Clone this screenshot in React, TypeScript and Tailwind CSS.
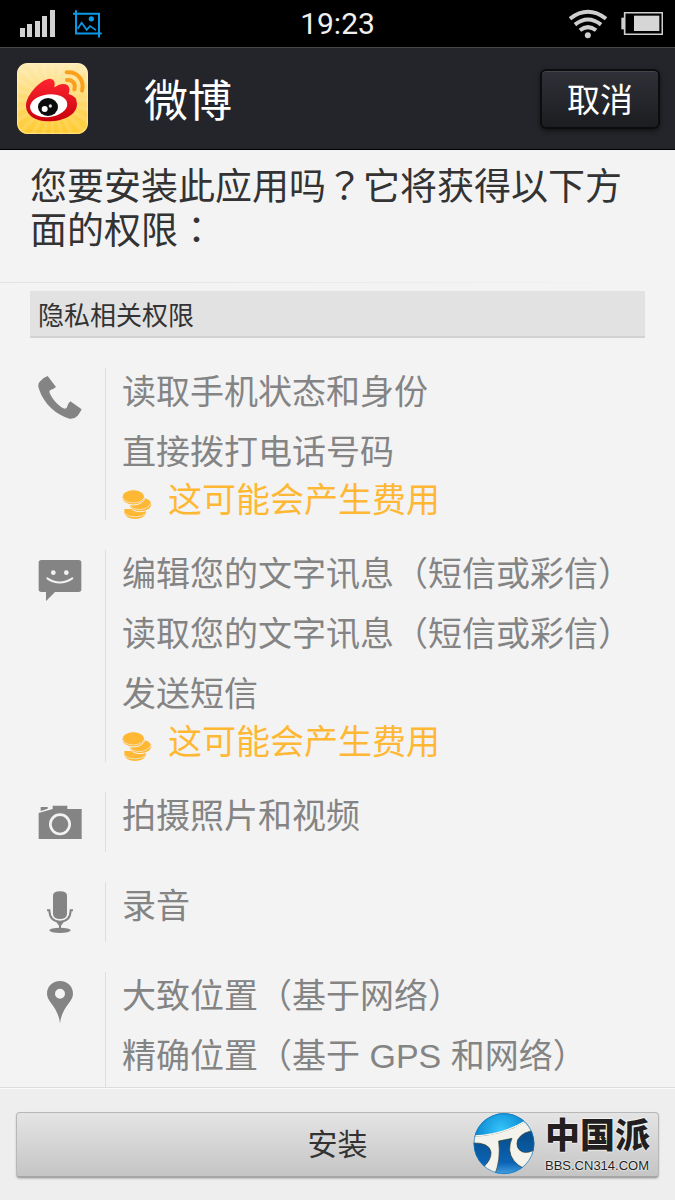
import type { ReactNode } from "react";

type Group = { id: string; icon: ReactNode; items: { text: string; fee?: boolean }[] };

const glyph = "h-12 w-11 shrink-0 fill-[#848484]";

function PhoneIcon() {
  return (
    <svg viewBox="114 63 132 144" className={glyph} aria-hidden="true">
      <path d="M143 63L168 96Q158 104 151 105Q147 108 149 114C158 135 176 152 190 160Q198 163 201 157Q203 146 211 139L245 163Q241 172 233 182Q223 193 208 191C172 180 132 150 117 102Q112 88 119 80Q130 67 143 63Z" />
    </svg>
  );
}

function MessageIcon() {
  return (
    <svg viewBox="114 606 132 144" className={glyph} aria-hidden="true">
      <path d="M124 612H236Q244 612 244 620V700Q244 708 236 708H165L138 735V708H124Q116 708 116 700V620Q116 612 124 612Z" />
      <circle cx="160" cy="650" r="7" fill="#f3f3f3" />
      <circle cx="199" cy="650" r="7" fill="#f3f3f3" />
      <path d="M142 667Q179 692 217 667" fill="none" stroke="#f3f3f3" strokeWidth="6" strokeLinecap="round" />
    </svg>
  );
}

function CameraIcon() {
  return (
    <svg viewBox="114 267 132 144" className={glyph} aria-hidden="true">
      <path d="M116 306L158 294V284H202V294H245V384H116Z" />
      <path d="M122 288H143V293L122 300Z" />
      <circle cx="180" cy="340" r="29" fill="none" stroke="#f3f3f3" strokeWidth="8" />
    </svg>
  );
}

function MicIcon() {
  return (
    <svg viewBox="114 537 132 144" className={glyph} aria-hidden="true">
      <path d="M159 553Q160 541 180 541Q200 541 201 553V609Q200 624 180 624Q160 624 159 609Z" />
      <path d="M141 598H148Q149 632 180 632Q211 632 212 598H219" fill="none" stroke="#848484" strokeWidth="6" />
      <path d="M168 632H192L183 644V652H177V644Z" />
      <ellipse cx="180" cy="658" rx="32" ry="8" />
    </svg>
  );
}

function PinIcon() {
  return (
    <svg viewBox="114 87 132 144" className={glyph} aria-hidden="true">
      <path
        fillRule="evenodd"
        d="M180 90C203 90 219 107 219 128C219 155 186 165 180 217C174 165 141 155 141 128C141 107 157 90 180 90ZM180 113A15 15 0 1 0 180 143A15 15 0 1 0 180 113Z"
      />
    </svg>
  );
}

function CoinsIcon() {
  return (
    <svg viewBox="365 402 90 93" className="mt-2 h-[31px] w-[30px] shrink-0" fill="#ffb833" aria-hidden="true">
      <path d="M372 462V472C373 485 388 492 404 492S436 485 437 472V462Z" />
      <path d="M373 474C380 489 428 489 436 474" fill="none" stroke="#f3f3f3" strokeWidth="2" />
      <ellipse cx="420" cy="448" rx="34" ry="22" stroke="#f3f3f3" strokeWidth="3" />
      <path d="M388 449C394 468 440 470 452 445" fill="none" stroke="#f3f3f3" strokeWidth="2" />
      <ellipse cx="399" cy="427" rx="34" ry="23" stroke="#f3f3f3" strokeWidth="3" />
      <path d="M367 428C372 448 424 450 431 428" fill="none" stroke="#f3f3f3" strokeWidth="2" />
    </svg>
  );
}

function WeiboLogo() {
  const rays = Array.from({ length: 24 }, (_, i) => i * 15);
  return (
    <svg viewBox="51 189 213 213" className="size-[71px] shrink-0" aria-label="微博" role="img">
      <defs>
        <linearGradient id="tile" x1="0" y1="0" x2="0" y2="1">
          <stop offset="0" stopColor="#fdebb2" />
          <stop offset="0.5" stopColor="#fedb73" />
          <stop offset="1" stopColor="#ffca2c" />
        </linearGradient>
        <linearGradient id="flame" x1="0" y1="0" x2="0" y2="1">
          <stop offset="0" stopColor="#ff2630" />
          <stop offset="1" stopColor="#c8000c" />
        </linearGradient>
        <clipPath id="tileClip">
          <rect x="51" y="189" width="213" height="213" rx="32" />
        </clipPath>
      </defs>
      <g clipPath="url(#tileClip)">
        <rect x="51" y="189" width="213" height="213" fill="url(#tile)" />
        {rays.map((a) => (
          <path key={a} d="M157 300L147 120H167Z" fill="#fff" opacity="0.13" transform={`rotate(${a} 157 300)`} />
        ))}
      </g>
      <rect x="53" y="191" width="209" height="209" rx="30" fill="none" stroke="#fff3c4" strokeOpacity="0.6" strokeWidth="3" />
      <path
        fill="url(#flame)"
        d="M150 236Q168 237 163 262Q187 245 203 256Q212 265 206 282Q231 288 231 312C231 345 190 364 146 364C105 364 77 345 78 315C80 285 120 238 150 236Z"
      />
      <ellipse cx="146" cy="317" rx="56" ry="34" fill="#fff" transform="rotate(-7 146 317)" />
      <ellipse cx="144" cy="321" rx="30" ry="27" fill="#0c0c0c" />
      <circle cx="134" cy="327" r="9" fill="#fff" />
      <circle cx="151" cy="318" r="5" fill="#ddd" />
      <path d="M200 217C232 214 254 240 246 272M201 240C219 239 228 252 223 268" fill="none" stroke="#fba01c" strokeWidth="12" strokeLinecap="round" />
    </svg>
  );
}

function ForumBall() {
  return (
    <svg viewBox="56 98 186 186" className="size-[62px] shrink-0" aria-hidden="true">
      <defs>
        <radialGradient id="sky" gradientUnits="userSpaceOnUse" cx="140" cy="150" r="80">
          <stop offset="0" stopColor="#35c6fb" />
          <stop offset="1" stopColor="#0a86cf" />
        </radialGradient>
        <linearGradient id="sea" x1="0" y1="0" x2="0" y2="1">
          <stop offset="0.4" stopColor="#07518f" />
          <stop offset="0.8" stopColor="#0c63b5" />
          <stop offset="1" stopColor="#49a6e6" />
        </linearGradient>
        <clipPath id="ballClip">
          <circle cx="149" cy="190" r="91" />
        </clipPath>
      </defs>
      <g clipPath="url(#ballClip)">
        <rect x="56" y="98" width="186" height="186" fill="url(#sea)" />
        <path d="M56 98H242V130L190 160L56 175Z" fill="url(#sky)" />
        <path
          d="M50 168Q140 168 216 122L246 150Q205 152 190 178Q182 205 205 215Q222 220 246 206L240 240L208 264Q170 245 166 210Q165 190 173 174L133 182Q140 240 120 286L83 264Q112 240 110 215Q105 185 50 188Z"
          fill="#f3f3ec"
          stroke="#3b3c2a"
          strokeWidth="2"
        />
        <path d="M50 167Q140 167 216 121L246 140" fill="none" stroke="#f3f3ec" strokeWidth="4" />
      </g>
      <circle cx="149" cy="190" r="90" fill="none" stroke="#1276b8" strokeWidth="2" />
    </svg>
  );
}

function SignalIcon() {
  return (
    <svg viewBox="0 0 35 27" className="h-[27px] w-[35px]" fill="#d2d2d2" aria-hidden="true">
      <rect x="0" y="18" width="5" height="9" />
      <rect x="7" y="14" width="5" height="13" />
      <rect x="15" y="11" width="5" height="16" />
      <rect x="22" y="6" width="5" height="21" />
      <rect x="30" y="0" width="5" height="27" />
    </svg>
  );
}

function ScreenshotIcon() {
  return (
    <svg viewBox="219 27 87 83" className="h-7 w-[29px]" fill="none" stroke="#0a9ae8" strokeWidth="6" aria-hidden="true">
      <path d="M228 27V97H305M219 38H297V109" />
      <path d="M233 83L245 65L260 86L270 75L288 87" strokeWidth="5" />
      <circle cx="274" cy="53" r="8" fill="#0a9ae8" stroke="none" />
    </svg>
  );
}

function WifiIcon() {
  return (
    <svg viewBox="701 28 115 90" className="h-[30px] w-[38px]" fill="none" stroke="#cfcfcf" strokeWidth="12" aria-hidden="true">
      <path d="M704 57Q758 15 813 57" />
      <path d="M719 75Q758 44 798 75" />
      <path d="M734 92Q758 73 783 92" />
      <circle cx="758" cy="107" r="9" fill="#cfcfcf" stroke="none" />
    </svg>
  );
}

function BatteryIcon() {
  return (
    <svg viewBox="858 36 126 69" className="h-[23px] w-[42px]" aria-hidden="true">
      <rect x="859" y="53" width="9" height="35" fill="#cfcfcf" />
      <rect x="869" y="38" width="113" height="65" fill="none" stroke="#cfcfcf" strokeWidth="5" />
      <rect x="897" y="47" width="76" height="46" fill="#d6d6d6" />
    </svg>
  );
}

const groups: Group[] = [
  { id: "phone", icon: <PhoneIcon />, items: [{ text: "读取手机状态和身份" }, { text: "直接拨打电话号码", fee: true }] },
  {
    id: "sms",
    icon: <MessageIcon />,
    items: [{ text: "编辑您的文字讯息（短信或彩信）" }, { text: "读取您的文字讯息（短信或彩信）" }, { text: "发送短信", fee: true }],
  },
  { id: "camera", icon: <CameraIcon />, items: [{ text: "拍摄照片和视频" }] },
  { id: "mic", icon: <MicIcon />, items: [{ text: "录音" }] },
  { id: "location", icon: <PinIcon />, items: [{ text: "大致位置（基于网络）" }, { text: "精确位置（基于 GPS 和网络）" }] },
];

function PermissionGroup({ group }: { group: Group }) {
  return (
    <li className="flex">
      <div className="w-[75px] shrink-0 pt-2 pl-2">{group.icon}</div>
      <ul className="min-w-0 flex-1 border-l border-[#dedede] pl-4">
        {group.items.map((item) => (
          <li key={item.text} className={item.fee ? "" : "pb-3"}>
            <p className="text-[34px] leading-[48px] whitespace-nowrap text-[#848484]">{item.text}</p>
            {item.fee && (
              <p className="flex h-11 items-center gap-4 pt-1 text-[34px] leading-[44px] text-[#ffb833]">
                <CoinsIcon />
                这可能会产生费用
              </p>
            )}
          </li>
        ))}
      </ul>
    </li>
  );
}

export default function App() {
  return (
    <div lang="zh-CN" className="flex h-screen flex-col bg-[#f3f3f3] font-['Liberation_Sans','Noto_Sans_CJK_SC',sans-serif]">
      <div className="grid h-[47px] shrink-0 grid-cols-3 items-center bg-black px-3">
        <div className="flex items-center gap-[18px] pl-2">
          <SignalIcon />
          <ScreenshotIcon />
        </div>
        <time className="text-center font-['Roboto',sans-serif] text-[30px] leading-[46px] text-[#f0f0f0]">19:23</time>
        <div className="flex items-center justify-end gap-[14px]">
          <WifiIcon />
          <BatteryIcon />
        </div>
      </div>

      <header className="flex h-[103px] shrink-0 items-center border-t border-b border-t-[#48484a] border-b-black bg-[#24252a] pr-[15px] pl-[17px]">
        <WeiboLogo />
        <h1 className="ml-14 flex-1 pt-1.5 text-[44px] leading-[60px] text-white">微博</h1>
        <button
          type="button"
          className="h-[60px] w-[120px] rounded-md border-2 border-[#0c0c0e] bg-linear-to-b from-[#303138] to-[#1c1d20] pt-1 text-[33px] leading-[52px] text-white shadow-[0_2px_5px_rgba(0,0,0,0.5),inset_0_1px_0_#45464c]"
        >
          取消
        </button>
      </header>

      <main className="min-h-0 flex-1 overflow-y-auto [scrollbar-width:none]">
        <h2 lang="zh-TW" className="px-[30px] pt-3 pb-8 font-['Noto_Sans_CJK_TC',sans-serif] text-[37px] leading-[44px] text-[#333]">
          您要安装此应用吗？它将获得以下方面的权限：
        </h2>
        <div className="h-px bg-linear-to-r from-[#e2e2e2] to-[#f3f3f3]" />
        <section className="px-[30px] pt-2">
          <h3 className="border-b-2 border-[#d2d2d2] bg-[#e2e2e2] px-2 pt-[5px] text-[26px] leading-[40px] text-[#333]">隐私相关权限</h3>
          <ul className="flex flex-col gap-[30px] pt-[30px]">
            {groups.map((g) => (
              <PermissionGroup key={g.id} group={g} />
            ))}
          </ul>
        </section>
      </main>

      <footer className="relative shrink-0 border-t border-[#dcdcdc] bg-[#eee] px-4 pt-6 pb-[22px] shadow-[inset_0_1px_0_#fafafa]">
        <button
          type="button"
          className="block h-[66px] w-full rounded-sm border border-b-2 border-[#b8b8b8] border-b-[#a6a6a6] bg-linear-to-b from-[#e4e4e4] to-[#c5c5c5] text-[30px] leading-[60px] text-[#333] shadow-[0_1px_2px_rgba(0,0,0,0.2)]"
        >
          安装
        </button>
        <div className="pointer-events-none absolute top-[25px] right-[25px] flex items-center gap-2.5">
          <ForumBall />
          <div className="text-[#231f20] [text-shadow:0_0_2px_#fff,0_0_2px_#fff]">
            <div className="text-[35px] leading-[44px] font-black">中国派</div>
            <div className="text-[13px] leading-[16px]">BBS.CN314.COM</div>
          </div>
        </div>
      </footer>
    </div>
  );
}
